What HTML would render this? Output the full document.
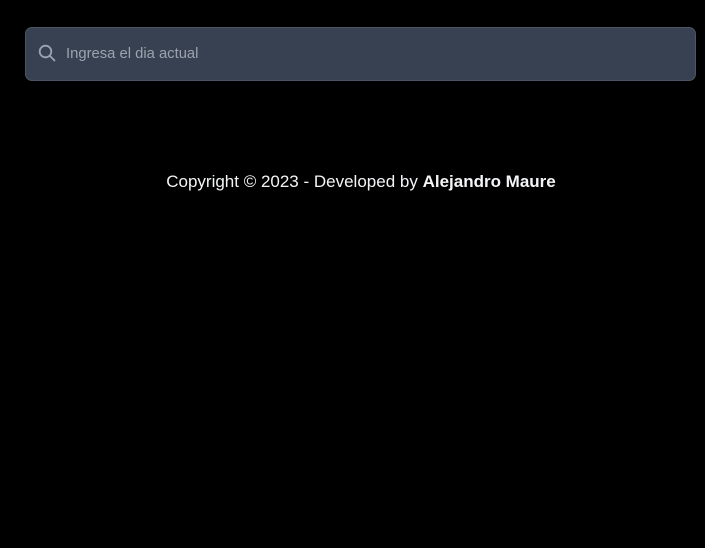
<!DOCTYPE html>
<html><head><style>
body{margin:0;background:#000;width:705px;height:548px;font-family:"Liberation Sans",sans-serif;overflow:hidden}
.box{position:absolute;left:25px;top:27px;width:669px;height:52px;background:#374151;border:1px solid #4b5563;border-radius:7px}
.box svg{position:absolute;left:12px;top:16px}
.ph{position:absolute;left:40px;top:18px;font-size:14.8px;color:#9ca3af}
.ft{position:absolute;top:172px;left:0;width:722px;text-align:center;color:#f3f4f6;font-size:17px}
</style></head><body>
<div class="box"><svg width="18" height="18" viewBox="0 0 18 18" fill="none" stroke="#9ca3af" stroke-width="1.8" stroke-linecap="round"><circle cx="7.5" cy="7.5" r="5.8"/><path d="M11.8 11.8 L16.5 16.5"/></svg><span class="ph">Ingresa el dia actual</span></div>
<div class="ft">Copyright © 2023 - Developed by <b>Alejandro Maure</b></div>
</body></html>
